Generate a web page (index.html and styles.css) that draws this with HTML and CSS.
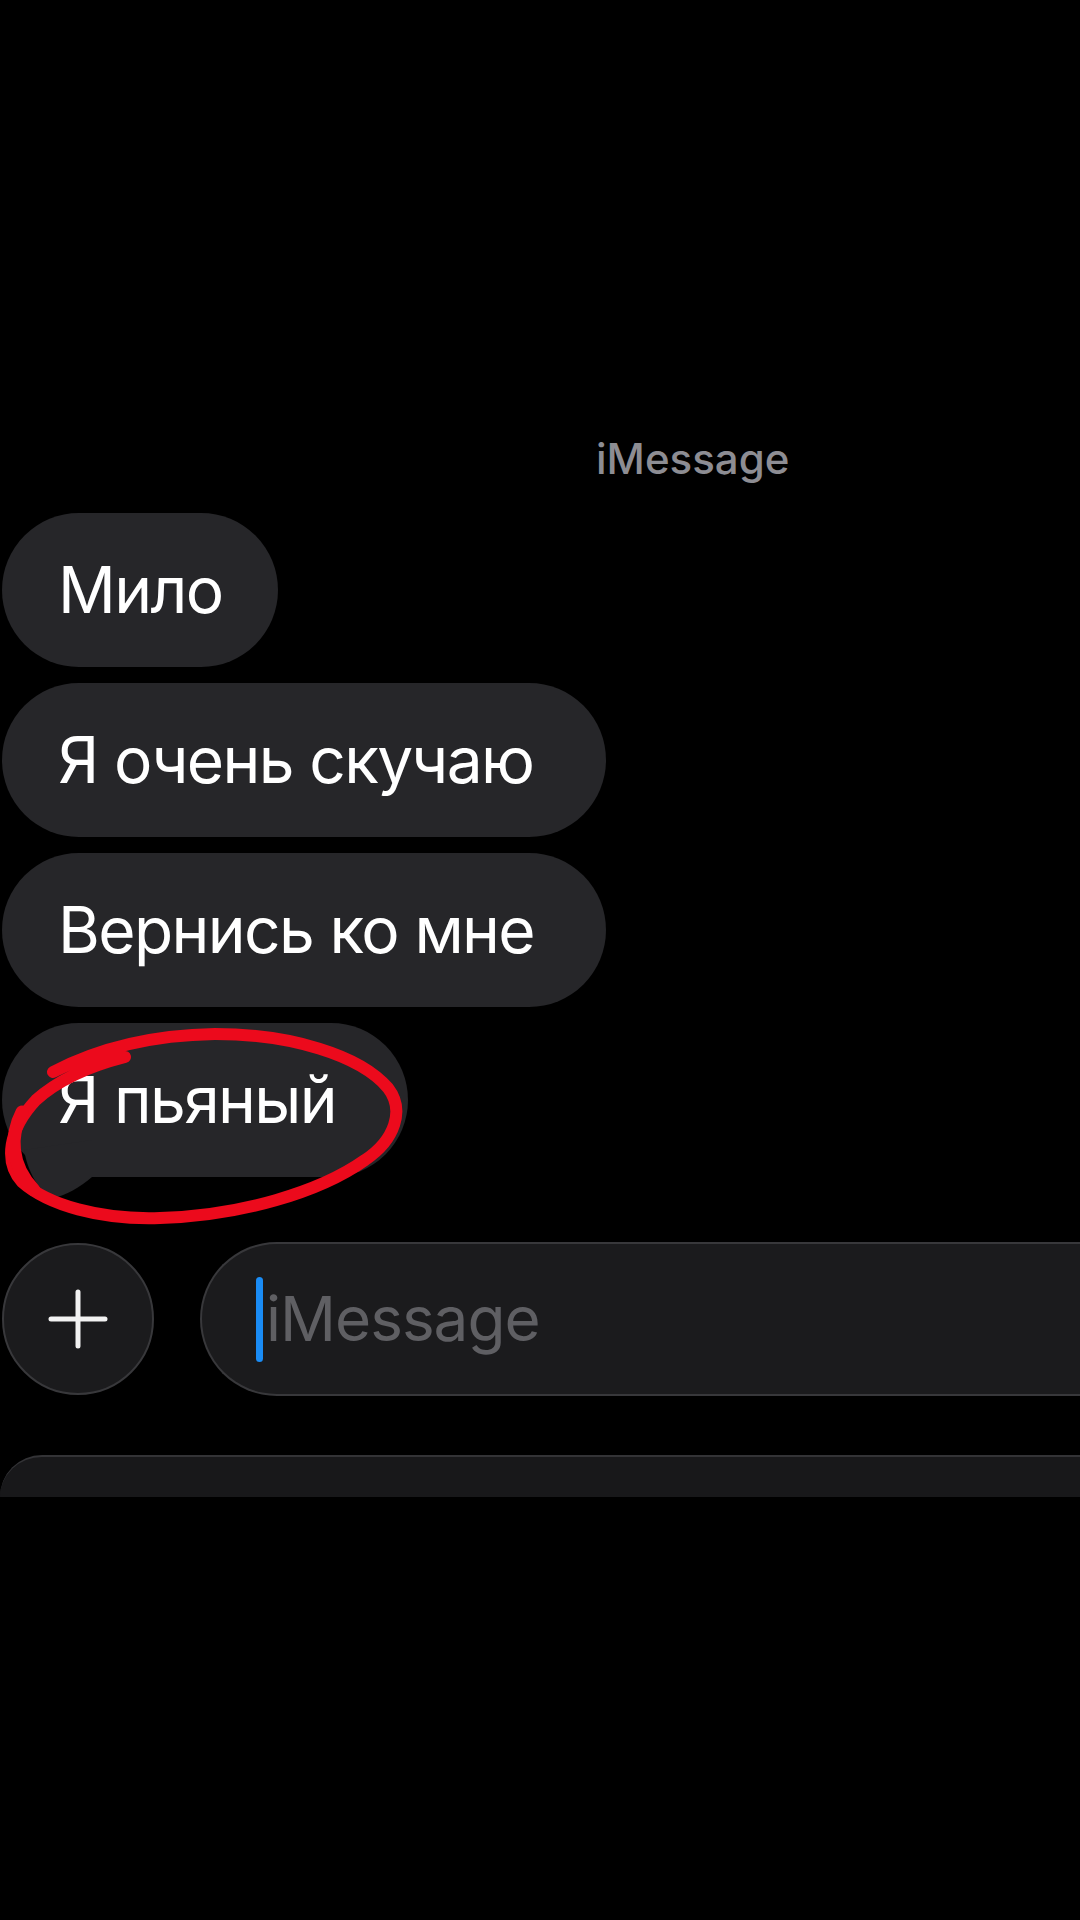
FILE: index.html
```html
<!DOCTYPE html>
<html lang="ru">
<head>
<meta charset="utf-8">
<title>iMessage</title>
<link rel="stylesheet" href="styles.css">
</head>
<body>
<div class="screen">
  <div class="service">iMessage</div>
  <div class="thread">
    <div class="bubble">Мило</div>
    <div class="bubble">Я очень скучаю </div>
    <div class="bubble">Вернись ко мне </div>
    <div class="bubble last">Я пьяный <svg class="overlay" viewBox="0 1010 420 230" width="420" height="230" aria-hidden="true">
        <path class="tail" d="M24 1150 C28 1172 38 1190 52 1198 C66 1196 80 1187 92 1177 L92 1140 Z"/>
        <path class="scribble" d="M53 1072 C95 1050 150 1035 215 1034 C290 1034 360 1055 388 1088 C405 1110 395 1140 365 1160 C320 1192 240 1216 160 1218 C100 1220 48 1205 22 1182 C4 1162 8 1130 36 1100 C56 1082 82 1068 125 1057"/>
        <path class="scribble thick" d="M22 1112 C10 1135 10 1165 34 1190"/>
      </svg></div>
  </div>
  <div class="composer">
    <div class="plus">
      <svg viewBox="0 0 60 60" width="60" height="60" aria-hidden="true">
        <path d="M30 3 V57 M3 30 H57"/>
      </svg>
    </div>
    <div class="field">
      <span class="caret"></span>
      <span class="placeholder">iMessage</span>
    </div>
  </div>
  <div class="tray"></div>
</div>
</body>
</html>
```

FILE: styles.css
```css
html, body {
  margin: 0;
  padding: 0;
  background: #000;
}

body {
  width: 1080px;
  height: 1920px;
  overflow: hidden;
  font-family: Inter, "Noto Sans", "DejaVu Sans", sans-serif;
  color: #fff;
}

.screen {
  display: flex;
  flex-direction: column;
  padding-top: 433px;
}

.service {
  padding-left: 596px;
  font-size: 42px;
  line-height: 52px;
  font-weight: 500;
  color: #8d8d93;
}

.thread {
  display: flex;
  flex-direction: column;
  align-items: flex-start;
  gap: 16px;
  margin-top: 28px;
  padding-left: 2px;
}

.bubble {
  position: relative;
  background: #262629;
  border-radius: 77px;
  padding: 39px 56px;
  font-size: 64px;
  line-height: 76px;
  letter-spacing: -1.6px;
  white-space: pre;
}

.overlay {
  position: absolute;
  left: -2px;
  top: -13px;
  overflow: visible;
}

.tail {
  fill: #262629;
}

.scribble {
  fill: none;
  stroke: #ec0a1c;
  stroke-width: 12;
  stroke-linecap: round;
  stroke-linejoin: round;
}

.scribble.thick {
  stroke-width: 13;
}

.composer {
  display: flex;
  align-items: center;
  gap: 46px;
  margin-top: 65px;
  padding-left: 2px;
}

.plus {
  flex: none;
  width: 148px;
  height: 148px;
  border: 2px solid #38383b;
  border-radius: 50%;
  background: #1b1b1d;
  display: flex;
  align-items: center;
  justify-content: center;
}

.plus path {
  stroke: #f2f2f2;
  stroke-width: 5;
  stroke-linecap: round;
  fill: none;
}

.field {
  flex: 1;
  height: 150px;
  border: 2px solid #38383b;
  border-right: none;
  border-radius: 77px 0 0 77px;
  background: #1b1b1d;
  display: flex;
  align-items: center;
  padding-left: 54px;
}

.caret {
  width: 7px;
  height: 85px;
  border-radius: 4px;
  background: #1a8cf5;
  margin-right: 3px;
}

.placeholder {
  font-size: 62px;
  line-height: 76px;
  letter-spacing: -1px;
  color: #5f5f63;
}

.tray {
  margin-top: 59px;
  height: 40px;
  border-top: 2px solid #333336;
  border-top-left-radius: 60px;
  background: #18181a;
}
```
